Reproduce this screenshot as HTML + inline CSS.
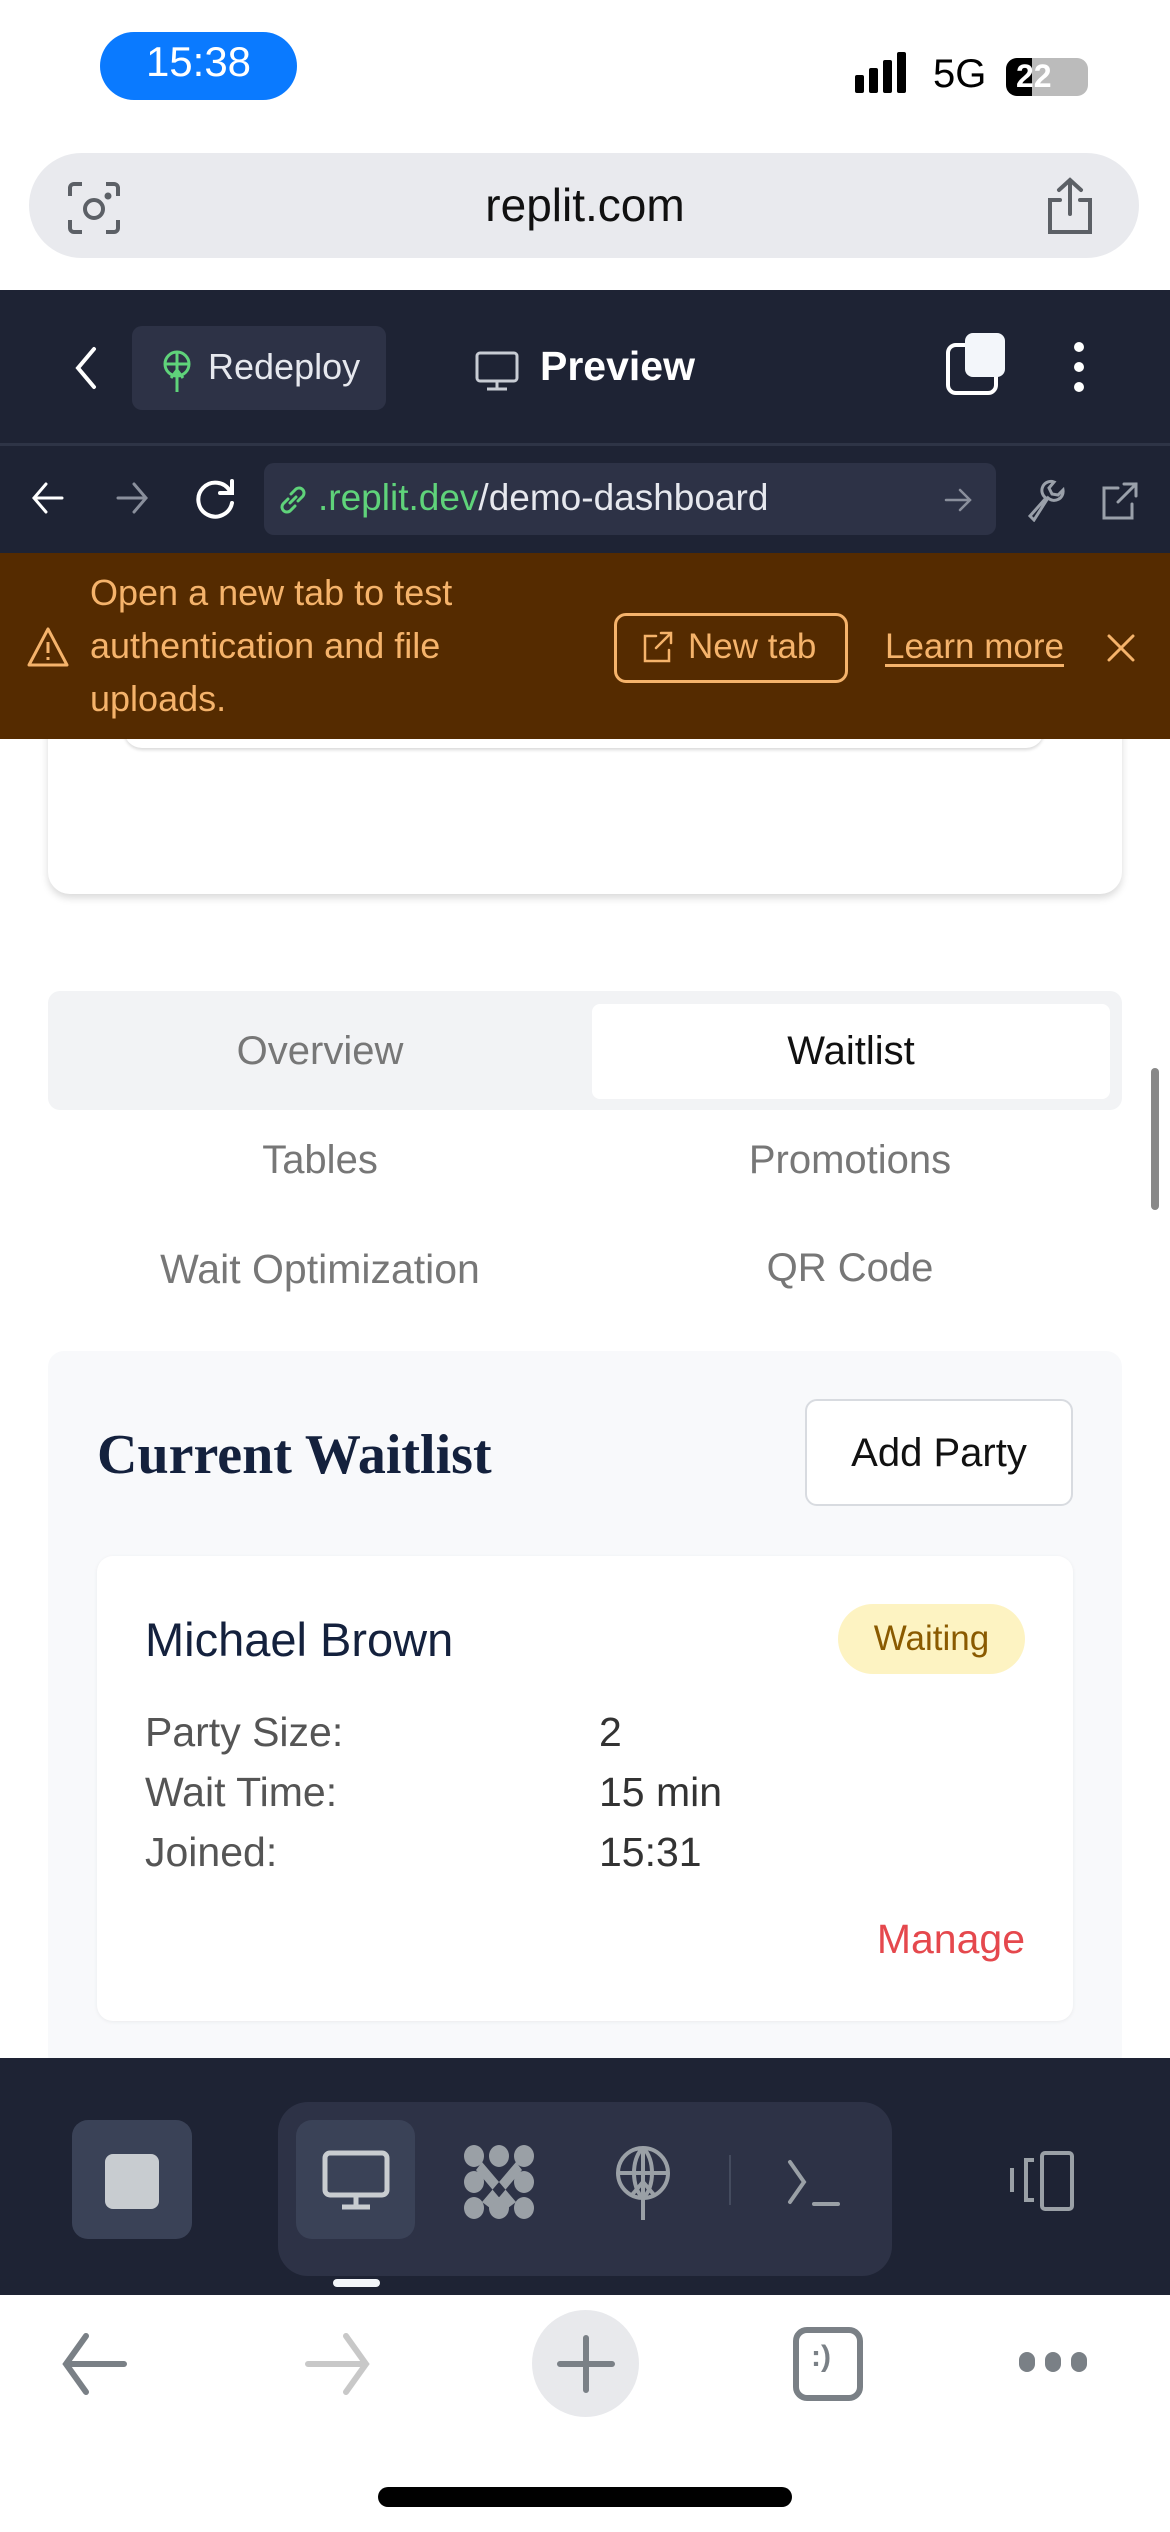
<!DOCTYPE html>
<html><head><meta charset="utf-8"><style>
*{margin:0;padding:0;box-sizing:border-box}
body{width:1170px;height:2532px;position:relative;overflow:hidden;background:#fff;font-family:"Liberation Sans",sans-serif}
.a{position:absolute}
.t{position:absolute;white-space:nowrap}
</style></head><body>
<!-- status bar -->
<div class="a" style="left:100px;top:32px;width:197px;height:68px;border-radius:34px;background:#0a7aff"></div>
<div class="t" style="left:100px;top:38px;width:197px;text-align:center;color:#fff;font-size:42px">15:38</div>
<div class="a" style="left:855px;top:75px;width:9px;height:18px;background:#000;border-radius:2px"></div>
<div class="a" style="left:869px;top:68px;width:9px;height:25px;background:#000;border-radius:2px"></div>
<div class="a" style="left:883px;top:60px;width:9px;height:33px;background:#000;border-radius:2px"></div>
<div class="a" style="left:897px;top:52px;width:9px;height:41px;background:#000;border-radius:2px"></div>
<div class="t" style="left:933px;top:52px;font-size:40px;color:#000">5G</div>
<div class="a" style="left:1006px;top:58px;width:82px;height:38px;border-radius:11px;background:#bbb"></div>
<div class="a" style="left:1006px;top:58px;width:26px;height:38px;border-radius:11px 0 0 11px;background:#000"></div>
<div class="t" style="left:1016px;top:58px;font-size:32px;color:#fff;font-weight:bold">22</div>
<!-- url bar -->
<div class="a" style="left:29px;top:153px;width:1110px;height:105px;border-radius:53px;background:#e9eaee"></div>
<svg class="a" style="left:66px;top:180px" width="56" height="56" viewBox="0 0 56 56" fill="none" stroke="#5c6066" stroke-width="4"><path d="M4 16V8a4 4 0 0 1 4-4h8M40 4h8a4 4 0 0 1 4 4v8M52 40v8a4 4 0 0 1-4 4h-8M16 52H8a4 4 0 0 1-4-4v-8"/><circle cx="28" cy="29" r="9"/><circle cx="42" cy="16" r="1.5" fill="#5c6066"/></svg>
<div class="t" style="left:0;width:1170px;text-align:center;top:178px;font-size:46px;color:#111">replit.com</div>
<svg class="a" style="left:1042px;top:176px" width="56" height="60" viewBox="0 0 56 60" fill="none" stroke="#5c6066" stroke-width="4" stroke-linecap="round"><path d="M28 4v34M17 14 28 4l11 10M18 24H8v32h40V24H38"/></svg>
<!-- dark header -->
<div class="a" style="left:0;top:290px;width:1170px;height:263px;background:#1e2334"></div>
<div class="a" style="left:0;top:443px;width:1170px;height:3px;background:#2e3446"></div>
<svg class="a" style="left:70px;top:345px" width="30" height="46" viewBox="0 0 30 46" fill="none" stroke="#fff" stroke-width="4" stroke-linecap="round"><path d="M24 4 8 23l16 19"/></svg>
<div class="a" style="left:132px;top:326px;width:254px;height:84px;border-radius:10px;background:#2d3246"></div>
<svg class="a" style="left:160px;top:350px" width="34" height="42" viewBox="0 0 34 42" fill="none" stroke="#5fd37a" stroke-width="3"><circle cx="17" cy="14" r="12"/><path d="M5 14h24M17 2v40M11 28l6-8 6 8"/></svg>
<div class="t" style="left:208px;top:346px;font-size:36px;color:#e6e8ee">Redeploy</div>
<svg class="a" style="left:474px;top:350px" width="46" height="42" viewBox="0 0 46 42" fill="none" stroke="#c8ccd4" stroke-width="3"><rect x="3" y="3" width="40" height="28" rx="3"/><path d="M23 31v8M13 39h20"/></svg>
<div class="t" style="left:540px;top:343px;font-size:41px;color:#fff;font-weight:bold">Preview</div>
<div class="a" style="left:946px;top:343px;width:52px;height:52px;border:4px solid #fff;border-radius:10px"></div>
<div class="a" style="left:965px;top:333px;width:40px;height:44px;background:#f3f6fa;border-radius:8px"></div>
<div class="a" style="left:1074px;top:342px;width:10px;height:10px;border-radius:5px;background:#fff"></div>
<div class="a" style="left:1074px;top:362px;width:10px;height:10px;border-radius:5px;background:#fff"></div>
<div class="a" style="left:1074px;top:382px;width:10px;height:10px;border-radius:5px;background:#fff"></div>
<!-- address row -->
<svg class="a" style="left:30px;top:480px" width="36" height="36" viewBox="0 0 36 36" fill="none" stroke="#fff" stroke-width="3" stroke-linecap="round"><path d="M32 18H4M16 4 4 18l12 14"/></svg>
<svg class="a" style="left:114px;top:480px" width="36" height="36" viewBox="0 0 36 36" fill="none" stroke="#8a8f9c" stroke-width="3" stroke-linecap="round"><path d="M4 18h28M20 4l12 14-12 14"/></svg>
<svg class="a" style="left:194px;top:477px" width="44" height="44" viewBox="0 0 44 44" fill="none" stroke="#fff" stroke-width="4" stroke-linecap="round"><path d="M36 14A17 17 0 1 0 38 26"/><path d="M38 4v12H26"/></svg>
<div class="a" style="left:264px;top:463px;width:732px;height:72px;border-radius:10px;background:#2d3246"></div>
<svg class="a" style="left:276px;top:483px" width="34" height="34" viewBox="0 0 34 34" fill="none" stroke="#5fd37a" stroke-width="3" stroke-linecap="round"><path d="M14 20 20 14M12 16l-5 5a5 5 0 0 0 7 7l5-5M22 18l5-5a5 5 0 0 0-7-7l-5 5"/></svg>
<div class="t" style="left:318px;top:477px;font-size:37px;color:#e6e8ee"><span style="color:#5fd37a">.replit.dev</span>/demo-dashboard</div>
<svg class="a" style="left:944px;top:487px" width="28" height="26" viewBox="0 0 28 26" fill="none" stroke="#8a8f9c" stroke-width="2.5" stroke-linecap="round"><path d="M2 13h24M16 3l10 10-10 10"/></svg>
<svg class="a" style="left:1024px;top:478px" width="44" height="44" viewBox="0 0 44 44" fill="none" stroke="#9aa0aa" stroke-width="3" stroke-linecap="round"><path d="M6 38 22 20a9 9 0 0 1 8-16l-5 6 3 6 6 1 5-5a9 9 0 0 1-15 8L10 42z"/></svg>
<svg class="a" style="left:1100px;top:480px" width="40" height="42" viewBox="0 0 40 42" fill="none" stroke="#9aa0aa" stroke-width="3" stroke-linecap="round"><path d="M18 8H4v30h28V24M24 4h12v12M36 4 18 22"/></svg>
<!-- top card -->
<div class="a" style="left:48px;top:700px;width:1074px;height:194px;background:#fff;border-radius:0 0 22px 22px;box-shadow:0 4px 8px rgba(0,0,0,.15)"></div>
<div class="a" style="left:124px;top:700px;width:920px;height:48px;border-radius:0 0 18px 18px;box-shadow:0 2px 3px rgba(0,0,0,.15);background:#fff"></div>
<!-- banner -->
<div class="a" style="left:0;top:553px;width:1170px;height:186px;background:#552b00"></div>
<svg class="a" style="left:26px;top:626px" width="44" height="42" viewBox="0 0 44 42" fill="none" stroke="#f5b36b" stroke-width="3" stroke-linejoin="round"><path d="M22 3 41 39H3z"/><path d="M22 16v11M22 31v3"/></svg>
<div class="a" style="left:90px;top:566px;font-size:36px;line-height:53px;color:#f5b36b">Open a new tab to test<br>authentication and file<br>uploads.</div>
<div class="a" style="left:614px;top:613px;width:234px;height:70px;border:3px solid #f5b36b;border-radius:12px"></div>
<svg class="a" style="left:642px;top:630px" width="32" height="34" viewBox="0 0 32 34" fill="none" stroke="#f5b36b" stroke-width="2.5" stroke-linecap="round"><path d="M14 6H3v25h24V20M19 3h10v10M29 3 14 18"/></svg>
<div class="t" style="left:688px;top:627px;font-size:35px;color:#f5b36b">New tab</div>
<div class="t" style="left:885px;top:627px;font-size:35px;color:#f5b36b;text-decoration:underline;text-underline-offset:6px">Learn more</div>
<svg class="a" style="left:1106px;top:633px" width="30" height="30" viewBox="0 0 30 30" stroke="#f5b36b" stroke-width="3" stroke-linecap="round"><path d="M3 3l24 24M27 3 3 27"/></svg>
<!-- tabs -->
<div class="a" style="left:48px;top:991px;width:1074px;height:119px;border-radius:12px;background:#f2f3f5"></div>
<div class="a" style="left:592px;top:1004px;width:518px;height:95px;border-radius:8px;background:#fff"></div>
<div class="t" style="left:48px;width:544px;text-align:center;top:1029px;font-size:40px;color:#777">Overview</div>
<div class="t" style="left:592px;width:518px;text-align:center;top:1029px;font-size:40px;color:#111">Waitlist</div>
<div class="t" style="left:48px;width:544px;text-align:center;top:1138px;font-size:40px;color:#777">Tables</div>
<div class="t" style="left:580px;width:540px;text-align:center;top:1138px;font-size:40px;color:#777">Promotions</div>
<div class="t" style="left:48px;width:544px;text-align:center;top:1246px;font-size:41px;color:#777">Wait Optimization</div>
<div class="t" style="left:580px;width:540px;text-align:center;top:1246px;font-size:40px;color:#777">QR Code</div>
<div class="a" style="left:1151px;top:1068px;width:8px;height:142px;border-radius:4px;background:#888"></div>
<!-- waitlist card -->
<div class="a" style="left:48px;top:1351px;width:1074px;height:720px;border-radius:16px;background:#f8f9fb"></div>
<div class="t" style="left:97px;top:1423px;font-family:'Liberation Serif',serif;font-weight:bold;font-size:56px;color:#14213d">Current Waitlist</div>
<div class="a" style="left:805px;top:1399px;width:268px;height:107px;border:2px solid #d8dbe0;border-radius:12px;background:#fff"></div>
<div class="t" style="left:805px;width:268px;text-align:center;top:1431px;font-size:40px;color:#111">Add Party</div>
<div class="a" style="left:97px;top:1556px;width:976px;height:465px;border-radius:16px;background:#fff;box-shadow:0 1px 4px rgba(0,0,0,.06)"></div>
<div class="t" style="left:145px;top:1612px;font-size:47px;color:#14213d">Michael Brown</div>
<div class="a" style="left:838px;top:1604px;width:187px;height:70px;border-radius:35px;background:#fdf3c2"></div>
<div class="t" style="left:838px;width:187px;text-align:center;top:1619px;font-size:35px;color:#8a5a00">Waiting</div>
<div class="a" style="left:145px;top:1702px;font-size:41px;line-height:60px;color:#555">Party Size:<br>Wait Time:<br>Joined:</div>
<div class="a" style="left:599px;top:1702px;font-size:41px;line-height:60px;color:#333">2<br>15 min<br>15:31</div>
<div class="t" style="right:145px;top:1916px;font-size:41px;color:#e5484d">Manage</div>
<!-- bottom toolbar -->
<div class="a" style="left:0;top:2058px;width:1170px;height:237px;background:#1e2334"></div>
<div class="a" style="left:72px;top:2120px;width:120px;height:119px;border-radius:16px;background:#3a4257"></div>
<div class="a" style="left:105px;top:2154px;width:54px;height:55px;border-radius:8px;background:#c8ccd0"></div>
<div class="a" style="left:278px;top:2102px;width:614px;height:174px;border-radius:30px;background:#2d3246"></div>
<div class="a" style="left:296px;top:2120px;width:119px;height:119px;border-radius:16px;background:#3a4257"></div>
<svg class="a" style="left:322px;top:2150px" width="68" height="62" viewBox="0 0 68 62" fill="none" stroke="#c8ccd0" stroke-width="5"><rect x="3" y="3" width="62" height="42" rx="5"/><path d="M34 45v12M20 57h28"/></svg>
<svg class="a" style="left:462px;top:2144px" width="74" height="76" viewBox="0 0 74 76" fill="#9aa0a6"><ellipse cx="12" cy="12" rx="10" ry="11"/><ellipse cx="37" cy="12" rx="10" ry="11"/><ellipse cx="62" cy="12" rx="10" ry="11"/><ellipse cx="12" cy="38" rx="10" ry="11"/><ellipse cx="62" cy="38" rx="10" ry="11"/><ellipse cx="12" cy="64" rx="10" ry="11"/><ellipse cx="37" cy="64" rx="10" ry="11"/><ellipse cx="62" cy="64" rx="10" ry="11"/><path d="M20 18 54 58 46 64 14 26zM54 18 20 58 28 64 60 26z"/></svg>
<svg class="a" style="left:614px;top:2146px" width="58" height="76" viewBox="0 0 58 76" fill="none" stroke="#9aa0a6" stroke-width="4"><circle cx="29" cy="27" r="25"/><path d="M4 27h50M29 2v72M17 50l12-14 12 14"/><path d="M29 2c-12 10-12 40 0 50M29 2c12 10 12 40 0 50"/></svg>
<div class="a" style="left:729px;top:2155px;width:2px;height:50px;background:#444b5e"></div>
<svg class="a" style="left:786px;top:2158px" width="56" height="52" viewBox="0 0 56 52" fill="none" stroke="#9aa0a6" stroke-width="4" stroke-linecap="round"><path d="M4 4l14 20L4 44M28 46h24"/></svg>
<svg class="a" style="left:1000px;top:2150px" width="76" height="62" viewBox="0 0 76 62" fill="none" stroke="#9aa0a6" stroke-width="4"><rect x="42" y="3" width="30" height="56" rx="3"/><path d="M34 10h-8v40h8M12 18v24"/></svg>
<div class="a" style="left:333px;top:2279px;width:47px;height:8px;border-radius:4px;background:#f3f6fa"></div>
<!-- safari bottom -->
<svg class="a" style="left:58px;top:2332px" width="72" height="64" viewBox="0 0 72 64" fill="none" stroke="#7a8086" stroke-width="6" stroke-linecap="round"><path d="M66 32H8M28 4 8 32l20 28"/></svg>
<svg class="a" style="left:302px;top:2332px" width="72" height="64" viewBox="0 0 72 64" fill="none" stroke="#c8c8c8" stroke-width="6" stroke-linecap="round"><path d="M6 32h58M44 4l20 28-20 28"/></svg>
<div class="a" style="left:532px;top:2310px;width:107px;height:107px;border-radius:54px;background:#e8e9ec"></div>
<svg class="a" style="left:556px;top:2334px" width="60" height="60" viewBox="0 0 60 60" stroke="#7a8086" stroke-width="6" stroke-linecap="round"><path d="M30 4v52M4 30h52"/></svg>
<div class="a" style="left:793px;top:2327px;width:70px;height:74px;border:6px solid #7a8086;border-radius:14px"></div>
<div class="t" style="left:811px;top:2340px;font-size:30px;color:#7a8086;font-weight:bold">:)</div>
<div class="a" style="left:1019px;top:2352px;width:16px;height:20px;border-radius:8px;background:#7a8086"></div>
<div class="a" style="left:1045px;top:2352px;width:16px;height:20px;border-radius:8px;background:#7a8086"></div>
<div class="a" style="left:1071px;top:2352px;width:16px;height:20px;border-radius:8px;background:#7a8086"></div>
<div class="a" style="left:378px;top:2487px;width:414px;height:20px;border-radius:10px;background:#000"></div>
</body></html>
